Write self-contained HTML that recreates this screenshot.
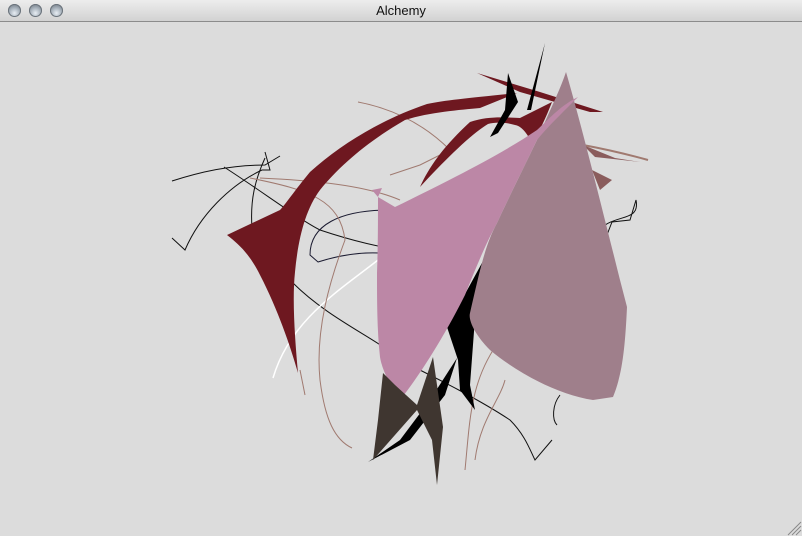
<!DOCTYPE html>
<html><head><meta charset="utf-8"><style>
html,body{margin:0;padding:0;width:802px;height:536px;overflow:hidden;background:#dcdcdc;font-family:"Liberation Sans",sans-serif}
.tb{position:absolute;left:0;top:0;width:802px;height:21px;background:linear-gradient(#ededed,#d2d2d2);border-bottom:1px solid #8c8c8c}
.t{position:absolute;left:0;right:0;top:3px;text-align:center;font-size:13px;color:#111}
.b{position:absolute;top:4px;width:13px;height:13px;border-radius:50%;background:radial-gradient(circle at 50% 70%,#e8eef4 0,#a9b3bd 45%,#5d6670 100%);box-shadow:0 0 0 1px #6b737b inset}
</style></head><body>
<div class="tb"><div class="b" style="left:8px"></div><div class="b" style="left:29px"></div><div class="b" style="left:50px"></div><div class="t">Alchemy</div></div>
<svg width="802" height="536" style="position:absolute;left:0;top:0">
<g fill="none" stroke-width="1">
<path d="M172 181 C200 172 230 165 265 165 L280 156 M224 167 C260 190 300 220 320 230 C350 240 380 248 420 253" stroke="#111"/>
<path d="M265 152 L270 170 L262 170 C230 185 200 215 185 250 L172 238" stroke="#111"/>
<path d="M265 158 C255 180 250 200 252 228" stroke="#111"/>
<path d="M390 210 C340 210 310 225 310 255 L318 262 C340 255 360 252 380 253" stroke="#1a1a30"/>
<path d="M293 283 C330 320 380 340 400 360 C440 380 480 400 510 420 C525 435 530 450 535 460 L552 440" stroke="#111"/>
<path d="M605 225 C620 215 640 220 636 200 L630 220 L612 222 L605 240" stroke="#111"/>
<path d="M560 395 C552 405 552 420 557 425" stroke="#111"/>
<path d="M273 378 C290 320 340 290 378 260" stroke="#fff" stroke-width="1.5"/>
<path d="M260 178 C300 180 360 183 400 200 M358 102 C400 110 430 130 450 150 L420 165 L390 175 M250 178 C310 190 340 200 345 240 C330 280 315 330 320 380 C325 420 335 440 352 448 M300 370 L305 395 M465 470 C470 420 470 380 500 340 M475 460 C480 420 500 400 505 380" stroke="#a07a70"/>
<path d="M583 145 C610 150 630 155 648 160" stroke="#a07a70" stroke-width="2"/>
</g>
<path d="M517 93 C470 98 445 100 427 104 C380 120 340 145 310 172 C295 190 285 205 280 210 L227 235 C240 245 250 255 260 275 C278 310 290 345 298 373 C295 340 292 300 295 272 C298 240 305 210 320 190 C340 165 370 140 405 120 C430 112 460 110 480 108 Z" fill="#6e1820"/>
<path d="M420 187 C430 165 445 145 470 122 C490 115 510 118 520 118 L552 102 C545 120 540 130 532 143 C528 135 522 126 515 125 C505 122 495 122 488 124 C470 135 445 160 420 187 Z" fill="#6e1820"/>
<path d="M477 73 L540 92 L603 112 L590 112 L520 92 Z" fill="#6e1820"/>
<path d="M508 73 L518 102 L498 133 L490 137 L505 110 Z" fill="#000"/>
<path d="M545 43 L531 110 L527 110 Z" fill="#000"/>
<path d="M583 145 L615 158 L640 162 L595 157 Z" fill="#8a5c5c"/>
<path d="M592 170 L612 180 L600 190 Z" fill="#8a5c5c"/>
<path d="M500 230 L480 300 L475 318 L470 385 L475 410 L460 390 L458 360 L447 327 Z" fill="#000"/>
<path d="M368 462 L400 440 L430 400 L457 358 L445 395 L410 440 Z" fill="#000"/>
<path d="M566 72 C580 120 600 200 620 280 L627 307 C625 350 622 375 613 397 L593 400 C560 395 520 375 490 350 C475 335 468 320 470 313 C480 270 485 245 497 223 C510 195 525 165 537 140 C550 110 560 90 566 72 Z" fill="#9f7f8b"/>
<path d="M378 197 L395 207 C450 180 500 155 537 130 C550 118 560 106 578 97 L570 105 C555 120 545 130 537 140 C525 165 510 195 497 223 C485 245 475 270 465 295 C445 335 420 375 400 400 C390 385 382 370 380 357 C377 330 377 300 377 273 C378 245 378 220 378 197 Z" fill="#bc87a6"/>
<path d="M372 190 L382 188 L378 197 Z" fill="#bc87a6"/>
<path d="M383 373 L395 385 L417 405 L433 357 L443 427 L437 485 L432 440 L417 410 L373 460 L378 420 Z" fill="#3f3630"/>
<path d="M788 535 L801 522 M792 535 L801 526 M796 535 L801 530" stroke="#888" stroke-width="1"/>
</svg>
</body></html>
